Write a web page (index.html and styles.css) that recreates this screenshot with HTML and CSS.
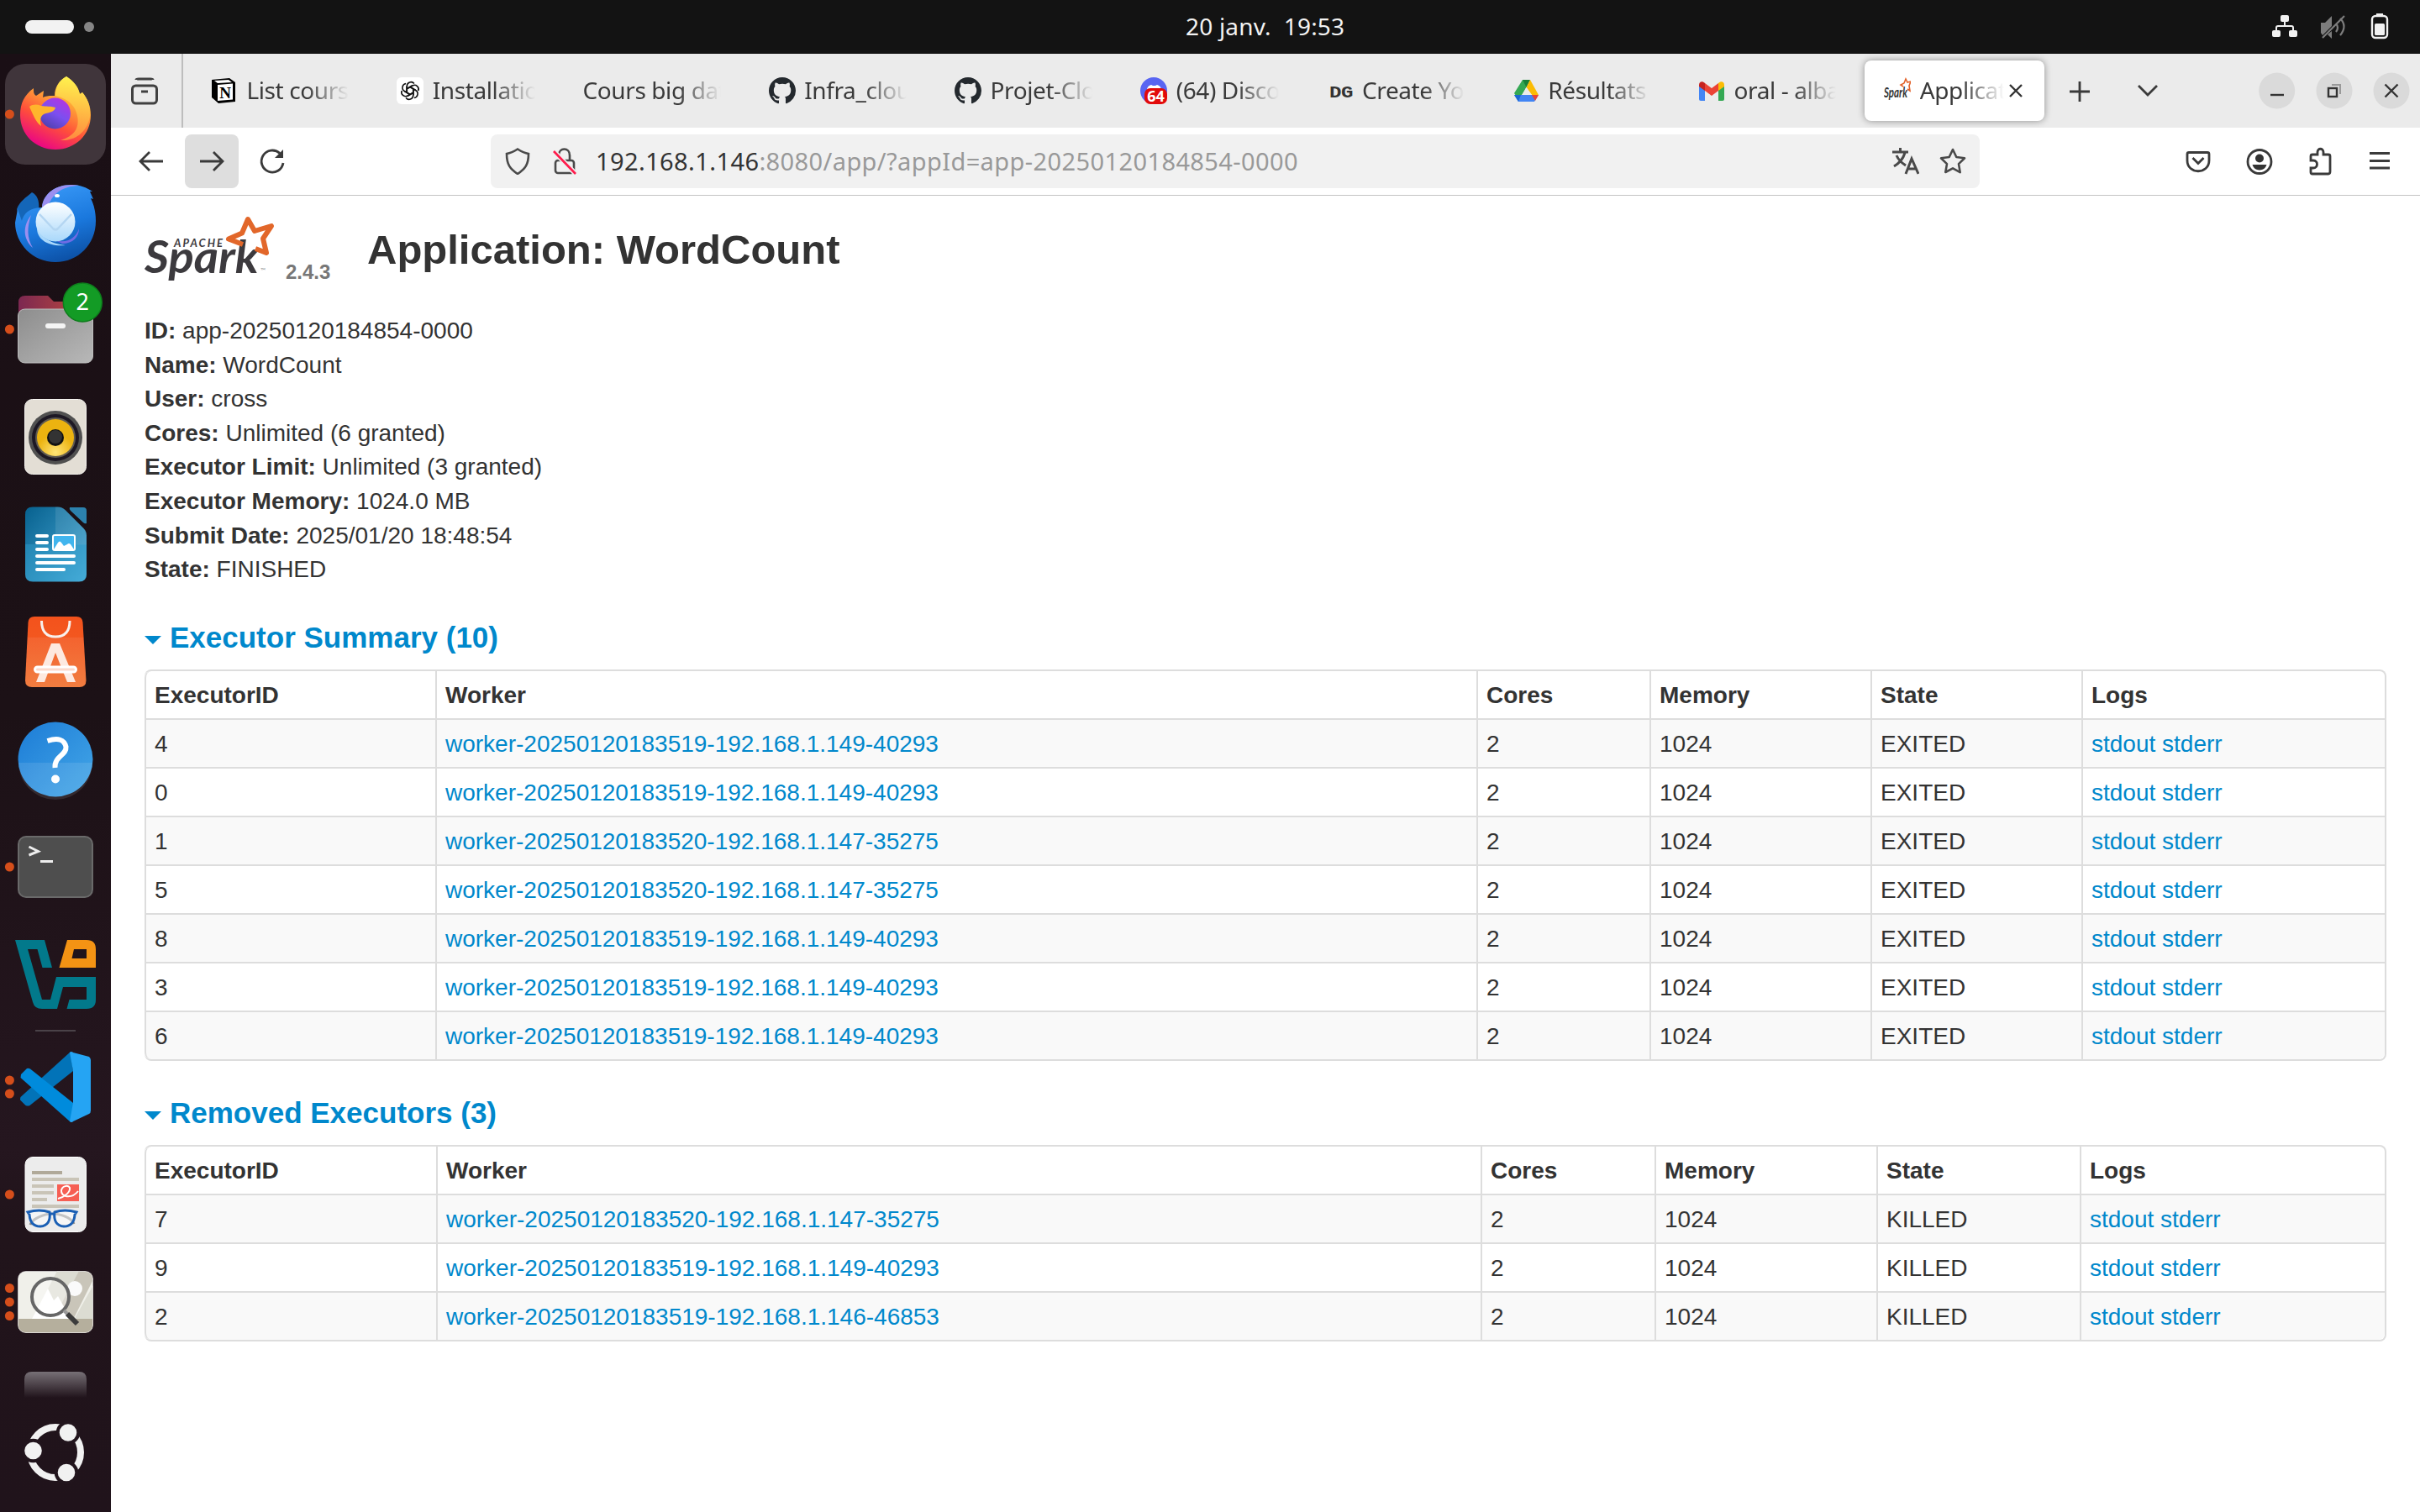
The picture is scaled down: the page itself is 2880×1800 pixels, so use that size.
FILE: index.html
```html
<!DOCTYPE html>
<html lang="fr">
<head>
<meta charset="utf-8">
<title>Application: WordCount</title>
<link rel="stylesheet" href="styles.css">
</head>
<body>
<header class="topbar">
  <div class="workspaces"><span class="ws-active"></span><span class="ws-dot"></span></div>
  <time class="clock">20 janv.&nbsp; 19:53</time>
  <svg class="tray" viewBox="2700 10 150 44" width="150" height="44">
    <g fill="#f2f2f2"><rect x="2714" y="18" width="10" height="8" rx="2"/><rect x="2704" y="36" width="10" height="8" rx="2"/><rect x="2724" y="36" width="10" height="8" rx="2"/></g>
    <path d="M2719 25v6M2709 37v-4q0-2 2-2h16q2 0 2 2v4" fill="none" stroke="#f2f2f2" stroke-width="2"/>
    <g fill="none" stroke="#7d7d7d" stroke-width="2.2"><path d="M2764 45 2790 19M2780 28q4 5 0 10M2785 22q9 9 0 20"/></g>
    <path d="M2762 27h5l8-8v12l-11 11-2-3zM2775 37v9l-5-5z" fill="#7d7d7d"/>
    <rect x="2823" y="19" width="18" height="26" rx="4" fill="none" stroke="#f2f2f2" stroke-width="2.4"/>
    <rect x="2828" y="16" width="8" height="3" fill="#f2f2f2"/><rect x="2826" y="28" width="12" height="14" rx="1.5" fill="#f2f2f2"/>
  </svg>
</header>
<div class="desktop">
<nav class="dock">
  <svg class="app" viewBox="0 72 132 128">
    <defs>
      <linearGradient id="ff" x1=".8" y1="0" x2=".3" y2="1"><stop offset="0" stop-color="#fff44f"/><stop offset=".35" stop-color="#ffa436"/><stop offset=".65" stop-color="#ff4f3a"/><stop offset="1" stop-color="#e8008a"/></linearGradient>
      <linearGradient id="fg" x1=".8" y1="0" x2=".2" y2="1"><stop offset="0" stop-color="#b833e1"/><stop offset=".5" stop-color="#7b4ff0"/><stop offset="1" stop-color="#4b3fa8"/></linearGradient>
      <linearGradient id="ff2" x1="0" y1="0" x2="0" y2="1"><stop offset="0" stop-color="#fff44f"/><stop offset="1" stop-color="#ff9640"/></linearGradient>
    </defs>
    <rect x="6" y="76" width="120" height="120" rx="24" fill="#40353b"/>
    <path d="M79 91c9 6 14 12 16 21l3-2c6 7 10 16 10 27 0 23-18 41-42 41S24 160 24 137c0-14 5-24 16-32 0 5 0 7 3 9l9-6-1 8c5-2 8-2 14-2 0-10 5-18 14-23z" fill="url(#ff)"/>
    <path d="M79 91c9 6 14 12 16 21l3-2c6 7 10 16 9 29-4 20-19 29-35 28 16-5 23-14 20-29-2-11-9-20-26-24 0-10 4-18 13-23z" fill="url(#ff2)" opacity=".85"/>
    <circle cx="65.5" cy="135" r="18.5" fill="url(#fg)"/>
    <path d="M35 127c4-3 9-3 14-1 6 1 11 0 17 2-1 6-10 6-14 8-5 3-4 9-3 14-6-4-9-12-14-23z" fill="#ffb52c"/>
    <circle class="run" cx="11.4" cy="136" r="5.5"/>
  </svg>
  <svg class="app" viewBox="0 200 132 128">
    <defs><linearGradient id="tb" x1=".3" y1="0" x2=".6" y2="1"><stop offset="0" stop-color="#3a9af8"/><stop offset=".55" stop-color="#1a78dd"/><stop offset="1" stop-color="#0c50a5"/></linearGradient><linearGradient id="tw" x1="0" y1="0" x2="0" y2="1"><stop offset="0" stop-color="#fff"/><stop offset="1" stop-color="#a9d8fb"/></linearGradient></defs>
    <path d="M38 229c8 4 9 13 8 22l-18 25-8-27c3-9 11-14 18-20z" fill="#1466b8"/>
    <path d="M50 247c1-16 16-27 35-27 10 0 18 3 25 8l-3 0 4 9-3-1c4 8 6 17 6 27 0 28-21 49-48 49S18 290 18 265l3-16 5 14c2-9 10-16 24-16z" fill="url(#tb)"/>
    <path d="M50 247c1-16 16-27 35-27q5 0 9 1c-22 1-30 10-36 22z" fill="#9b8ff0"/>
    <path d="M37 256c-10 13-10 28 2 39-7-12-7-24-2-39z" fill="#9b8ff0"/>
    <path d="M94 272c-4 12-15 18-28 14l8 4c13 0 20-8 20-18z" fill="#6f6be4"/>
    <path d="M44 270c3 12 16 20 34 22-19 2-35-6-34-22z" fill="#a9d8fb"/>
    <circle cx="66" cy="264" r="23.500" fill="url(#tw)"/><path d="M47 255 63 272q3 3 6 0L85 255" fill="none" stroke="#b4d6f2" stroke-width="2.500"/>
    <ellipse cx="68" cy="233" rx="3" ry="2" fill="#fff"/>
  </svg>
  <svg class="app" viewBox="0 328 132 128">
    <defs><linearGradient id="fr" x1="0" x2="1"><stop offset="0" stop-color="#7c2851"/><stop offset="1" stop-color="#c24b3b"/></linearGradient><linearGradient id="fo" x1="0" y1="0" x2="1" y2="1"><stop offset="0" stop-color="#8d8d8d"/><stop offset="1" stop-color="#b8b8b8"/></linearGradient></defs>
    <path d="M22 390v-30q0-8 8-8h27l7 7h38q8 0 8 8v20z" fill="url(#fr)"/>
    <rect x="21.5" y="368" width="89" height="64" rx="8" fill="url(#fo)" stroke="#bdbdbd"/>
    <rect x="54" y="385" width="24" height="6" rx="3" fill="#f4f4f4"/>
    <circle cx="98.3" cy="360" r="23" fill="#139b25" stroke="#0e7d1c" stroke-width="1.5"/><text x="98.3" y="369" text-anchor="middle" class="badge">2</text>
    <circle class="run" cx="11.4" cy="392" r="5.5"/>
  </svg>
  <svg class="app" viewBox="0 456 132 128">
    <defs><radialGradient id="rb" cy=".9"><stop offset="0" stop-color="#ffe477"/><stop offset="1" stop-color="#ecb310"/></radialGradient></defs>
    <rect x="29.5" y="475.500" width="73" height="89" rx="9" fill="#e3ded5" stroke="#f5f3ef"/>
    <circle cx="66" cy="521" r="32" fill="#505050"/><circle cx="66" cy="521" r="28" fill="#1d1824"/><circle cx="66" cy="521" r="24" fill="#605b52"/><circle cx="66" cy="521" r="22" fill="url(#rb)"/><circle cx="66" cy="521" r="10" fill="#111"/><circle cx="66" cy="520" r="8" fill="#333"/>
  </svg>
  <svg class="app" viewBox="0 584 132 128">
    <defs><linearGradient id="lw" x1="0" y1="0" x2="1" y2="1"><stop offset="0" stop-color="#07618f"/><stop offset="1" stop-color="#4badd9"/></linearGradient></defs>
    <path d="M39 603.500h30q5 0 9 4l21 21q4 4 4 9v46q0 9-9 9H39q-9 0-9-9v-71q0-9 9-9z" fill="url(#lw)"/>
    <path d="M66 603.500h3q5 0 9 4l21 21q4 4 4 9v11H66z" fill="#fff" opacity=".1"/><path d="M30 648h73v36q0 8-9 8H39q-9 0-9-8z" fill="#39a8d8" opacity=".35"/>
    <path d="M83 604h16q4 0 4 4v15q-2 1-4-1L84 608q-2-2-1-4z" fill="#2c82ae"/>
    <path d="M44 638h12M44 646h12M44 654h12M44 662h44M44 670h44M44 678h32" stroke="#fff" stroke-width="4" stroke-linecap="round"/>
    <rect x="63" y="637" width="26" height="18" rx="2" fill="#41b5ee" stroke="#fff" stroke-width="2"/><path d="M64 654l5-8q2-3 4 0l3 4 4-2q2-2 4 0l4 6z" fill="#fff"/>
  </svg>
  <svg class="app" viewBox="0 712 132 128">
    <defs><linearGradient id="sw" x1="0" y1="0" x2="0" y2="1"><stop offset="0" stop-color="#f3521c"/><stop offset=".29" stop-color="#f3571f"/><stop offset=".3" stop-color="#f4632f"/><stop offset="1" stop-color="#f17d40"/></linearGradient></defs>
    <path d="M41 734h50q7 0 7.500 7l4 69q0 8-8 8H38q-8 0-8-8l3.500-69q.5-7 7.500-7z" fill="url(#sw)"/>
    <path d="M49.500 739c0 12 5 19 16.500 19s17-7 17-19" fill="none" stroke="#f8f0ec" stroke-width="3"/>
    <path d="M61 766h10l19 46H80L66 777 53 812H43z" fill="#fde9e0"/><rect x="41.500" y="794" width="49" height="6" rx="3" fill="#fcd9cc" stroke="#fff" stroke-width="3"/>
  </svg>
  <svg class="app" viewBox="0 840 132 128">
    <defs><linearGradient id="hp" x1="0" y1="0" x2="1" y2="1"><stop offset="0" stop-color="#1c7cd6"/><stop offset="1" stop-color="#44a7e8"/></linearGradient></defs>
    <circle cx="66" cy="904" r="44.500" fill="url(#hp)"/><path d="M22 908h88a44 44 0 0 1-88 0z" fill="#fff" opacity=".1"/>
    <path d="M56.500 882q19-6 22 7c1 10-14 11-13 25" fill="none" stroke="#fff" stroke-width="6"/><circle cx="66" cy="927.500" r="5" fill="#fff"/>
  </svg>
  <svg class="app" viewBox="0 968 132 128">
    <rect x="22" y="996" width="88" height="72" rx="9" fill="#4e4e4e" stroke="#6a6a6a" stroke-width="2"/>
    <path d="M34.500 1008l11 5.500-11 4.500" fill="none" stroke="#eee" stroke-width="3"/><rect x="48" y="1024" width="15" height="3" fill="#eee"/>
    <circle class="run" cx="11.4" cy="1032" r="5.500"/>
  </svg>
  <svg class="app" viewBox="0 1096 132 128">
    <path fill-rule="evenodd" d="M18 1119h35l9 33H50.500l-6-22H33l17 60h10l7-27h47v27q0 11-11 11H79.500l3-11H103v-15H75l-7 26H50q-9 0-11-8z" fill="#02798b"/>
    <path fill-rule="evenodd" d="M80 1119h23q11 0 11 11v22H70.500zM88 1130l-2.500 11H103v-11z" fill="#f49314"/>
  </svg>
  <div class="dock-sep"></div>
  <svg class="app" viewBox="0 1230 132 128">
    <path d="M84 1252 24.500 1306q-1 3 0 4l6 6q3 1 5 0L87 1275z" fill="#0273b8"/>
    <path d="M25 1279l7-7q2-.6 4 .5L87 1313v22q-2 1-4 0L24.500 1283z" fill="#008bdc"/>
    <path d="M87 1253q-2-2-4 0l4 22v38l-4 22q2 2 4 0l19-9q2-1 2-4v-60q0-2-2-4z" fill="#25a4f3"/>
    <circle class="run" cx="11.400" cy="1286" r="5.500"/><circle class="run" cx="11.400" cy="1302" r="5.500"/>
  </svg>
  <svg class="app" viewBox="0 1358 132 128">
    <rect x="30" y="1377.500" width="72.500" height="89" rx="9" fill="#ececec" stroke="#fff"/>
    <path d="M38 1396h36" stroke="#b0a999" stroke-width="4"/><path d="M38 1404h56M38 1412h26M38 1420h26M38 1428h18M38 1436h56" stroke="#c9c4b7" stroke-width="4"/>
    <rect x="68" y="1410" width="26" height="20" fill="#f65f54"/><path d="M69 1427c8-2 15-8 14-13-2-4-9-2-10 3-1 8 12 11 20 1" fill="none" stroke="#fff" stroke-width="2"/>
    <path d="M36 1458q4-9 22-13M88 1457q-4-9-22-12" fill="none" stroke="#888" stroke-width="3"/>
    <path d="M33 1443q14-4 26 0 2 16-11 17-12 0-13-14zM91 1443q-14-4-26 0-2 16 11 17 12 0 13-14zM59 1445h6" fill="#fff" fill-opacity=".5" stroke="#1a5fb4" stroke-width="3"/>
    <circle class="run" cx="11.400" cy="1422" r="5.500"/>
  </svg>
  <svg class="app" viewBox="0 1486 132 128">
    <defs><clipPath id="iv"><rect x="21.500" y="1513.500" width="89" height="73" rx="9"/></clipPath></defs>
    <g clip-path="url(#iv)"><rect x="21" y="1513" width="90" height="74" fill="#f0f0ea"/><path d="M68 1513h26l-40 74H30z" fill="#dcdcd2"/><path d="M94 1513h17v10l-32 64H54z" fill="#c9c5b9"/><path d="M111 1530v57H79z" fill="#dcdcd2"/><rect x="21" y="1570" width="90" height="17" fill="#b5af9d"/><path d="M38 1570l19-36 7 14 5-5 15 27z" fill="#fff"/></g>
    <circle cx="89" cy="1534" r="9" fill="#fafafa"/><circle cx="60" cy="1544" r="22" fill="#fff" fill-opacity=".35" stroke="#666" stroke-width="4"/><path d="M76 1560l4 4" stroke="#999" stroke-width="4"/><path d="M80 1564l12 12" stroke="#3c3c3c" stroke-width="6"/>
    <rect x="21.500" y="1513.500" width="89" height="73" rx="9" fill="none" stroke="#fff" stroke-opacity=".5"/>
    <circle class="run" cx="11.400" cy="1533.500" r="5.500"/><circle class="run" cx="11.400" cy="1550" r="5.500"/><circle class="run" cx="11.400" cy="1566.500" r="5.500"/>
  </svg>
  <svg class="app app-cut" viewBox="0 1614 132 50">
    <defs><linearGradient id="fd" x1="0" y1="0" x2="0" y2="1"><stop offset="0" stop-color="#777076"/><stop offset="1" stop-color="#777076" stop-opacity="0"/></linearGradient></defs>
    <path d="M29 1664v-22q0-9 9-9h56q9 0 9 9v22z" fill="url(#fd)"/>
  </svg>
  <svg class="app" viewBox="0 1664 132 128">
    <circle cx="66" cy="1729" r="30" fill="none" stroke="#f1f1f1" stroke-width="8"/>
    <g fill="#f1f1f1" stroke="#21141c" stroke-width="4"><circle cx="39.500" cy="1727" r="12.300"/><circle cx="81" cy="1705.500" r="12.300"/><circle cx="79" cy="1753" r="12.300"/></g>
  </svg>
</nav>
<main class="window">
  <div class="tabstrip">
    <div class="view"><svg viewBox="0 0 34 34" width="34" height="34" fill="none" stroke="#404040" stroke-width="3"><rect x="2.500" y="11" width="29" height="21" rx="4"/><path d="M7 4q0-1 3-1h14q3 0 3 1" /><path d="M13 18h8"/></svg></div>
    <div class="tabs">
      <div class="tab"><svg class="fav" viewBox="0 0 32 32"><path d="M1 3 22 1l7 5v23l-20 2-8-7z" fill="#000"/><path d="M8 9l18-1.500v19L8 28zM4 4l17-1 4 3-17 1z" fill="#fff"/><text x="17" y="25" text-anchor="middle" class="fav-n">N</text></svg><span>List cours</span></div>
      <div class="tab"><svg class="fav" viewBox="0 0 32 32"><rect width="32" height="32" rx="6" fill="#fff"/><g fill="none" stroke="#111" stroke-width="1.600"><path id="petal" d="M12.300 18V10.500a4.800 4.800 0 0 1 8.600-3M12.300 13.500l6.500-3.700"/><use href="#petal" transform="rotate(60 16 16)"/><use href="#petal" transform="rotate(120 16 16)"/><use href="#petal" transform="rotate(180 16 16)"/><use href="#petal" transform="rotate(240 16 16)"/><use href="#petal" transform="rotate(300 16 16)"/></g></svg><span>Installation</span></div>
      <div class="tab tab-plain"><span>Cours big data</span></div>
      <div class="tab"><svg class="fav" viewBox="0 0 16 16"><path class="gh" d="M8 0C3.580 0 0 3.580 0 8c0 3.540 2.290 6.530 5.470 7.590.4.070.55-.17.55-.38 0-.19-.01-.82-.01-1.490-2.010.37-2.530-.49-2.690-.94-.09-.23-.48-.94-.82-1.130-.28-.15-.68-.52-.01-.53.63-.01 1.080.58 1.230.82.72 1.210 1.870.87 2.330.66.070-.52.28-.87.51-1.070-1.780-.2-3.640-.89-3.640-3.950 0-.87.31-1.590.82-2.150-.08-.2-.36-1.020.08-2.120 0 0 .67-.21 2.200.82.64-.18 1.320-.27 2-.27s1.360.09 2 .27c1.530-1.040 2.200-.82 2.200-.82.44 1.100.16 1.920.08 2.120.51.56.82 1.270.82 2.150 0 3.070-1.870 3.750-3.650 3.950.29.25.54.73.54 1.480 0 1.070-.01 1.930-.01 2.200 0 .21.15.46.55.38A8.010 8.010 0 0 0 16 8c0-4.420-3.580-8-8-8z"/></svg><span>Infra_cloud</span></div>
      <div class="tab"><svg class="fav" viewBox="0 0 16 16"><path class="gh" d="M8 0C3.580 0 0 3.580 0 8c0 3.540 2.290 6.530 5.470 7.590.4.070.55-.17.55-.38 0-.19-.01-.82-.01-1.490-2.010.37-2.530-.49-2.690-.94-.09-.23-.48-.94-.82-1.130-.28-.15-.68-.52-.01-.53.63-.01 1.080.58 1.230.82.72 1.210 1.870.87 2.330.66.070-.52.28-.87.51-1.070-1.780-.2-3.640-.89-3.640-3.950 0-.87.31-1.590.82-2.150-.08-.2-.36-1.020.08-2.120 0 0 .67-.21 2.200.82.64-.18 1.320-.27 2-.27s1.360.09 2 .27c1.530-1.040 2.200-.82 2.200-.82.44 1.100.16 1.920.08 2.120.51.56.82 1.270.82 2.150 0 3.070-1.870 3.750-3.650 3.950.29.25.54.73.54 1.480 0 1.070-.01 1.930-.01 2.200 0 .21.15.46.55.38A8.010 8.010 0 0 0 16 8c0-4.420-3.580-8-8-8z"/></svg><span>Projet-Cloud</span></div>
      <div class="tab"><svg class="fav" viewBox="0 0 32 32"><circle cx="16" cy="16" r="16" fill="#5865f2"/><path d="M8 14q1-4 5-5l2 1h3l2-1q4 1 5 5v5H8z" fill="#fff"/><rect x="5" y="13" width="27" height="19" rx="7" fill="#e20a0a"/><text x="18.500" y="29" text-anchor="middle" class="fav-64">64</text></svg><span>(64) Discord</span></div>
      <div class="tab"><svg class="fav" viewBox="0 0 32 32"><text x="3" y="24" class="fav-dg" textLength="28" lengthAdjust="spacingAndGlyphs">DG</text></svg><span>Create Your</span></div>
      <div class="tab"><svg class="fav" viewBox="0 0 32 32"><path d="M12 3h9l-13 25-6-9z" fill="#34a853"/><path d="M12 3h9l-4.500 9z" fill="#188038"/><path d="M21 3l10 18h-8l-6.500-9z" fill="#fbbc04"/><path d="M2 21h29l-5 8H7z" fill="#4285f4"/><path d="M23 21h8l-4 7z" fill="#ea4335"/><path d="M2 21h8l-3 8z" fill="#1967d2"/><path d="M16.500 12 11 21h12z" fill="#ebebeb"/></svg><span>Résultats</span></div>
      <div class="tab"><svg class="fav" viewBox="0 0 32 32"><path d="M1 10l7 5v13H3q-2 0-2-2z" fill="#4285f4"/><path d="M31 10l-7 5v13h5q2 0 2-2z" fill="#34a853"/><path d="M8 7l8 6 8-6v9l-8 6-8-6z" fill="#ea4335"/><path d="M8 7v9l-7-5V9c0-4 4-5 7-2z" fill="#c5221f"/><path d="M24 7v9l7-5V9c0-4-4-5-7-2z" fill="#fbbc04"/></svg><span>oral - alban</span></div>
      <div class="tab tab-active"><svg class="fav" viewBox="0 0 32 32"><text x="0" y="24" class="fav-sp" textLength="28" lengthAdjust="spacingAndGlyphs">Spark</text><path d="M23 11l-3-2 4-2 2-5 2 4 4-1-2 5 1 6-3-2" fill="none" stroke="#e2622a" stroke-width="1.600"/></svg><span>Application</span><svg class="close" viewBox="0 0 16 16" width="16" height="16"><path d="M1 1l14 14M15 1 1 15" stroke="#333" stroke-width="2.400"/></svg></div>
    </div>
    <svg class="tabtools" viewBox="2432 64 448 88" width="448" height="88">
      <g fill="none" stroke="#3a3a3a" stroke-width="2.800"><path d="M2463 109h24M2475 97v24M2545 102l11 11 11-11"/></g>
      <g fill="#dadada"><circle cx="2709.700" cy="108" r="21.500"/><circle cx="2778" cy="108" r="21.500"/><circle cx="2846" cy="108" r="21.500"/></g>
      <g fill="none" stroke="#333" stroke-width="2.400"><path d="M2702 113h16"/><rect x="2771" y="105" width="10" height="10"/><path d="M2838.500 100.500l15 15M2853.500 100.500l-15 15"/></g><path d="M2775 101h10v11" fill="none" stroke="#999" stroke-width="2"/>
    </svg>
  </div>
  <div class="navbar">
    <div class="navbtns">
      <div class="btn"><svg viewBox="0 0 32 32"><path d="M30 16H3M14 5 3 16l11 11"/></svg></div>
      <div class="btn btn-hover"><svg viewBox="0 0 32 32"><path d="M2 16h27M18 5l11 11-11 11"/></svg></div>
      <div class="btn"><svg viewBox="0 0 32 32"><path d="M29 18a13 13 0 1 1-4-11.500"/><path d="M29 2v10H19z" fill="#3a3a3a" stroke="none"/></svg></div>
    </div>
    <div class="urlbar">
      <svg class="ic" viewBox="0 0 32 32"><path d="M16 1.500q7 4.500 13 5.500c0 13-4 18-13 24C7 25 3 20 3 7q6-1 13-5.500z"/></svg>
      <svg class="ic ic-lock" viewBox="0 0 32 32"><rect x="5" y="15" width="22" height="15" rx="3"/><path d="M9 9c0-10 13-10 13 0v6"/><path d="M3 4 29 31" stroke="#f0f0f0" stroke-width="6"/><path d="M3 4 29 31" stroke="#ff1b4b" stroke-width="2.600"/></svg>
      <p class="url">192.168.1.146<span>:8080/app/?appId=app-20250120184854-0000</span></p>
      <svg class="ic" viewBox="0 0 32 32"><path d="M0 5h19M9.500 0v5M15 6q-3 10-13 16M5 9q3 7 11 12M16 31l7-18 8 18M19 25h9" stroke-width="3"/></svg>
      <svg class="ic ic-star" viewBox="0 0 32 32"><path stroke-linejoin="round" d="M16 2l4.300 9 9.700 1.300-7 6.800 1.700 10L16 24.400 7.300 29 9 19.100 2 12.300 11.700 11z"/></svg>
    </div>
    <svg class="navtools" viewBox="2592 160 260 64" width="260" height="64">
      <g fill="none" stroke="#3a3a3a" stroke-width="2.800"><path d="M2605 181.500h22q2 0 2 2V191c0 17-26 17-26 0v-7.500q0-2 2-2zM2609.500 188l6.500 6.500 6.500-6.500"/><circle cx="2689" cy="192.500" r="14"/>
      <path d="M2750 190v-4q0-2 2-2h6v-3c0-5 7-5 7 0v3h6q2 0 2 2v18q0 3-2 3h-19q-2 0-2-2v-5h3c6 0 6-9 0-9h-3z"/><path d="M2820 182.500h24M2820 191.500h24M2820 200h24"/></g>
      <circle cx="2689" cy="188.500" r="5" fill="#333"/><path d="M2680.500 196h17q-2 6.500-8.500 6.500t-8.500-6.500z" fill="#333"/>
    </svg>
  </div>
  <div class="page">
    <div class="brandrow">
      <svg class="logo" viewBox="172 252 160 88" width="160" height="88"><text x="172" y="325" class="spark" textLength="136" lengthAdjust="spacingAndGlyphs">Spark</text><text x="207" y="294" class="apache" textLength="58">APACHE</text><path d="M289 291 272 284.500 288 277.500 295 261 303 275 323 269 313 284 317 301 304 296" class="star"/><text x="310" y="325" class="tm">™</text></svg>
      <span class="version">2.4.3</span>
      <h1>Application: WordCount</h1>
    </div>
    <ul class="info">
      <li><strong>ID:</strong> app-20250120184854-0000</li>
      <li><strong>Name:</strong> WordCount</li>
      <li><strong>User:</strong> cross</li>
      <li><strong>Cores:</strong> Unlimited (6 granted)</li>
      <li><strong>Executor Limit:</strong> Unlimited (3 granted)</li>
      <li><strong>Executor Memory:</strong> 1024.0 MB</li>
      <li><strong>Submit Date:</strong> 2025/01/20 18:48:54</li>
      <li><strong>State:</strong> FINISHED</li>
    </ul>
    <h2><span class="caret"></span>Executor Summary (10)</h2>
    <table class="summary">
      <colgroup><col class="c1"><col class="c2"><col class="c3"><col class="c4"><col class="c5"><col></colgroup>
      <thead><tr><th>ExecutorID</th><th>Worker</th><th>Cores</th><th>Memory</th><th>State</th><th>Logs</th></tr></thead>
      <tbody>
        <tr><td>4</td><td><a>worker-20250120183519-192.168.1.149-40293</a></td><td>2</td><td>1024</td><td>EXITED</td><td><a>stdout</a> <a>stderr</a></td></tr>
        <tr><td>0</td><td><a>worker-20250120183519-192.168.1.149-40293</a></td><td>2</td><td>1024</td><td>EXITED</td><td><a>stdout</a> <a>stderr</a></td></tr>
        <tr><td>1</td><td><a>worker-20250120183520-192.168.1.147-35275</a></td><td>2</td><td>1024</td><td>EXITED</td><td><a>stdout</a> <a>stderr</a></td></tr>
        <tr><td>5</td><td><a>worker-20250120183520-192.168.1.147-35275</a></td><td>2</td><td>1024</td><td>EXITED</td><td><a>stdout</a> <a>stderr</a></td></tr>
        <tr><td>8</td><td><a>worker-20250120183519-192.168.1.149-40293</a></td><td>2</td><td>1024</td><td>EXITED</td><td><a>stdout</a> <a>stderr</a></td></tr>
        <tr><td>3</td><td><a>worker-20250120183519-192.168.1.149-40293</a></td><td>2</td><td>1024</td><td>EXITED</td><td><a>stdout</a> <a>stderr</a></td></tr>
        <tr><td>6</td><td><a>worker-20250120183519-192.168.1.149-40293</a></td><td>2</td><td>1024</td><td>EXITED</td><td><a>stdout</a> <a>stderr</a></td></tr>
      </tbody>
    </table>
    <h2 class="second"><span class="caret"></span>Removed Executors (3)</h2>
    <table class="removed">
      <colgroup><col class="c1"><col class="c2"><col class="c3"><col class="c4"><col class="c5"><col></colgroup>
      <thead><tr><th>ExecutorID</th><th>Worker</th><th>Cores</th><th>Memory</th><th>State</th><th>Logs</th></tr></thead>
      <tbody>
        <tr><td>7</td><td><a>worker-20250120183520-192.168.1.147-35275</a></td><td>2</td><td>1024</td><td>KILLED</td><td><a>stdout</a> <a>stderr</a></td></tr>
        <tr><td>9</td><td><a>worker-20250120183519-192.168.1.149-40293</a></td><td>2</td><td>1024</td><td>KILLED</td><td><a>stdout</a> <a>stderr</a></td></tr>
        <tr><td>2</td><td><a>worker-20250120183519-192.168.1.146-46853</a></td><td>2</td><td>1024</td><td>KILLED</td><td><a>stdout</a> <a>stderr</a></td></tr>
      </tbody>
    </table>
  </div>
</main>
</div>
</body>
</html>
```
FILE: styles.css
```css
* { box-sizing: border-box; }
body { margin: 0; width: 2880px; height: 1800px; overflow: hidden; display: flex; flex-direction: column; font-family: "Liberation Sans", Arial, sans-serif; background: #fff; }
svg { display: block; flex: none; }

.topbar { height: 64px; flex: none; background: #131313; color: #f2f2f2; display: grid; grid-template-columns: 1250px auto 1fr; align-items: center; padding: 0 30px; font: 28px/64px "Noto Sans", sans-serif; }
.workspaces { display: flex; align-items: center; gap: 12px; }
.ws-active { width: 58px; height: 16px; border-radius: 8px; background: #f2f2f2; }
.ws-dot { width: 12px; height: 12px; border-radius: 6px; background: #868686; }
.clock { padding-left: 131px; letter-spacing: 0.2px; position: relative; top: -1px; }
.tray { justify-self: end; }

.desktop { flex: 1; display: flex; min-height: 0; }
.dock { width: 132px; flex: none; padding-top: 8px; background: linear-gradient(#1a0f15, #1c1116 45%, #25161f 75%, #21141b 80%, #20131b); display: flex; flex-direction: column; }
.app { width: 132px; height: 128px; }
.app-cut { height: 50px; }
.run { fill: #d54e1b; }
.badge { font: 27px "Noto Sans", sans-serif; fill: #fff; }
.dock-sep { width: 48px; height: 2px; margin: 2px 42px; background: #4a4248; flex: none; }

.window { flex: 1; display: flex; flex-direction: column; min-width: 0; }
.tabstrip { height: 88px; flex: none; background: #ebebeb; display: flex; align-items: center; }
.view { width: 86px; height: 88px; border-right: 2px solid #bdbdbd; display: flex; align-items: center; padding-left: 23px; }
.tabs { flex: 1; display: flex; gap: 8px; padding-left: 10px; min-width: 0; }
.tab { width: 213.250px; height: 72px; flex: none; display: flex; align-items: center; padding: 0 26px 0 23px; color: #3a3a3a; font: 28px/70px "Noto Sans", sans-serif; letter-spacing: -0.4px; }
.tab span { height: 72px; margin-left: 10.500px; flex: 1; min-width: 0; white-space: nowrap; overflow: hidden; -webkit-mask-image: linear-gradient(to left, transparent, #000 50px); mask-image: linear-gradient(to left, transparent, #000 50px); }
.tab-plain span { margin-left: 0; }
.tab-active { background: #fff; border-radius: 8px; box-shadow: 0 0 8px rgba(0,0,0,.4); }
.close { margin-left: 6px; }
.fav { width: 32px; height: 32px; }
.gh { fill: #24292e; }
.fav-n { font: bold 19px "Liberation Serif", serif; }
.fav-64 { font: bold 18px "Noto Sans", sans-serif; fill: #fff; letter-spacing: 0; }
.fav-dg { font: bold 20px "Liberation Mono", monospace; fill: #333; }
.fav-sp { font: italic bold 17px Lato, sans-serif; fill: #333; letter-spacing: 0; }

.navbar { height: 81px; flex: none; border-bottom: 1px solid #c4c4c4; display: flex; align-items: center; background: #fff; }
.navbtns { display: flex; gap: 8px; padding-left: 16px; width: 452px; }
.btn { width: 64px; height: 64px; border-radius: 8px; display: grid; place-items: center; }
.btn svg { width: 32px; height: 32px; fill: none; stroke: #3a3a3a; stroke-width: 2.8; }
.btn-hover { background: #dedede; }
.urlbar { width: 1772px; height: 64px; border-radius: 8px; background: #f1f1f1; display: flex; align-items: center; padding: 0 16px; }
.ic { width: 32px; height: 32px; fill: none; stroke: #4a4a4a; stroke-width: 2.6; }
.ic-lock { margin-left: 24px; }
.ic-star { margin-left: 24px; }
.url { flex: 1; margin: 0 0 0 21px; font: 29px/64px "Noto Sans", sans-serif; color: #333; letter-spacing: 0.400px; white-space: nowrap; }
.url span { color: #999; }
.navtools { margin-left: 236px; }

.page { flex: 1; padding: 19px 40px 0; color: #333; font-size: 28px; line-height: 40px; }
.brandrow { height: 88px; display: flex; align-items: flex-start; }
.spark { font: italic bold 54px Lato, sans-serif; fill: #3c3a3e; }
.apache { font: italic bold 13px Lato, sans-serif; fill: #3c3a3e; }
.tm { font: 8px Lato, sans-serif; fill: #999; }
.star { fill: none; stroke: #e2672a; stroke-width: 6; stroke-linejoin: round; }
.version { width: 98px; padding: 52px 0 0 8px; font-weight: bold; font-size: 24px; line-height: 40px; color: #777; }
h1 { margin: 17px 0 0 7px; font-size: 49px; line-height: 56px; }
.info { list-style: none; height: 325px; margin: 34px 0 0; padding: 0; line-height: 40.600px; }
h2 { margin: 40px 0 18px; font-size: 35px; line-height: 40px; color: #08c; display: flex; align-items: center; }
.second { margin-top: 42px; }
.caret { border: 10px solid transparent; border-top-color: #08c; border-bottom: 0; margin: 5px 10px 0 0; }
table { width: 2668px; table-layout: fixed; border-collapse: separate; border-spacing: 0; border: 2px solid #ddd; border-left: 0; border-radius: 8px; }
th, td { border-left: 2px solid #ddd; border-bottom: 2px solid #ddd; padding: 9px 10px 7px; text-align: left; line-height: 40px; white-space: nowrap; height: 58px; }
tr:last-child td { border-bottom: 0; height: 56px; }
thead tr:last-child th { border-bottom: 2px solid #ddd; }
tbody tr:nth-child(odd) td { background: #f9f9f9; }
th:first-child { border-top-left-radius: 8px; }
tbody tr:last-child td:first-child { border-bottom-left-radius: 8px; }
tbody tr:last-child td:last-child { border-bottom-right-radius: 8px; }
a { color: #08c; }
.summary .c1 { width: 346px; } .summary .c2 { width: 1239px; } .summary .c3 { width: 206px; } .summary .c4 { width: 263px; } .summary .c5 { width: 251px; }
.removed .c1 { width: 347px; } .removed .c2 { width: 1243px; } .removed .c3 { width: 207px; } .removed .c4 { width: 264px; } .removed .c5 { width: 242px; }
```
